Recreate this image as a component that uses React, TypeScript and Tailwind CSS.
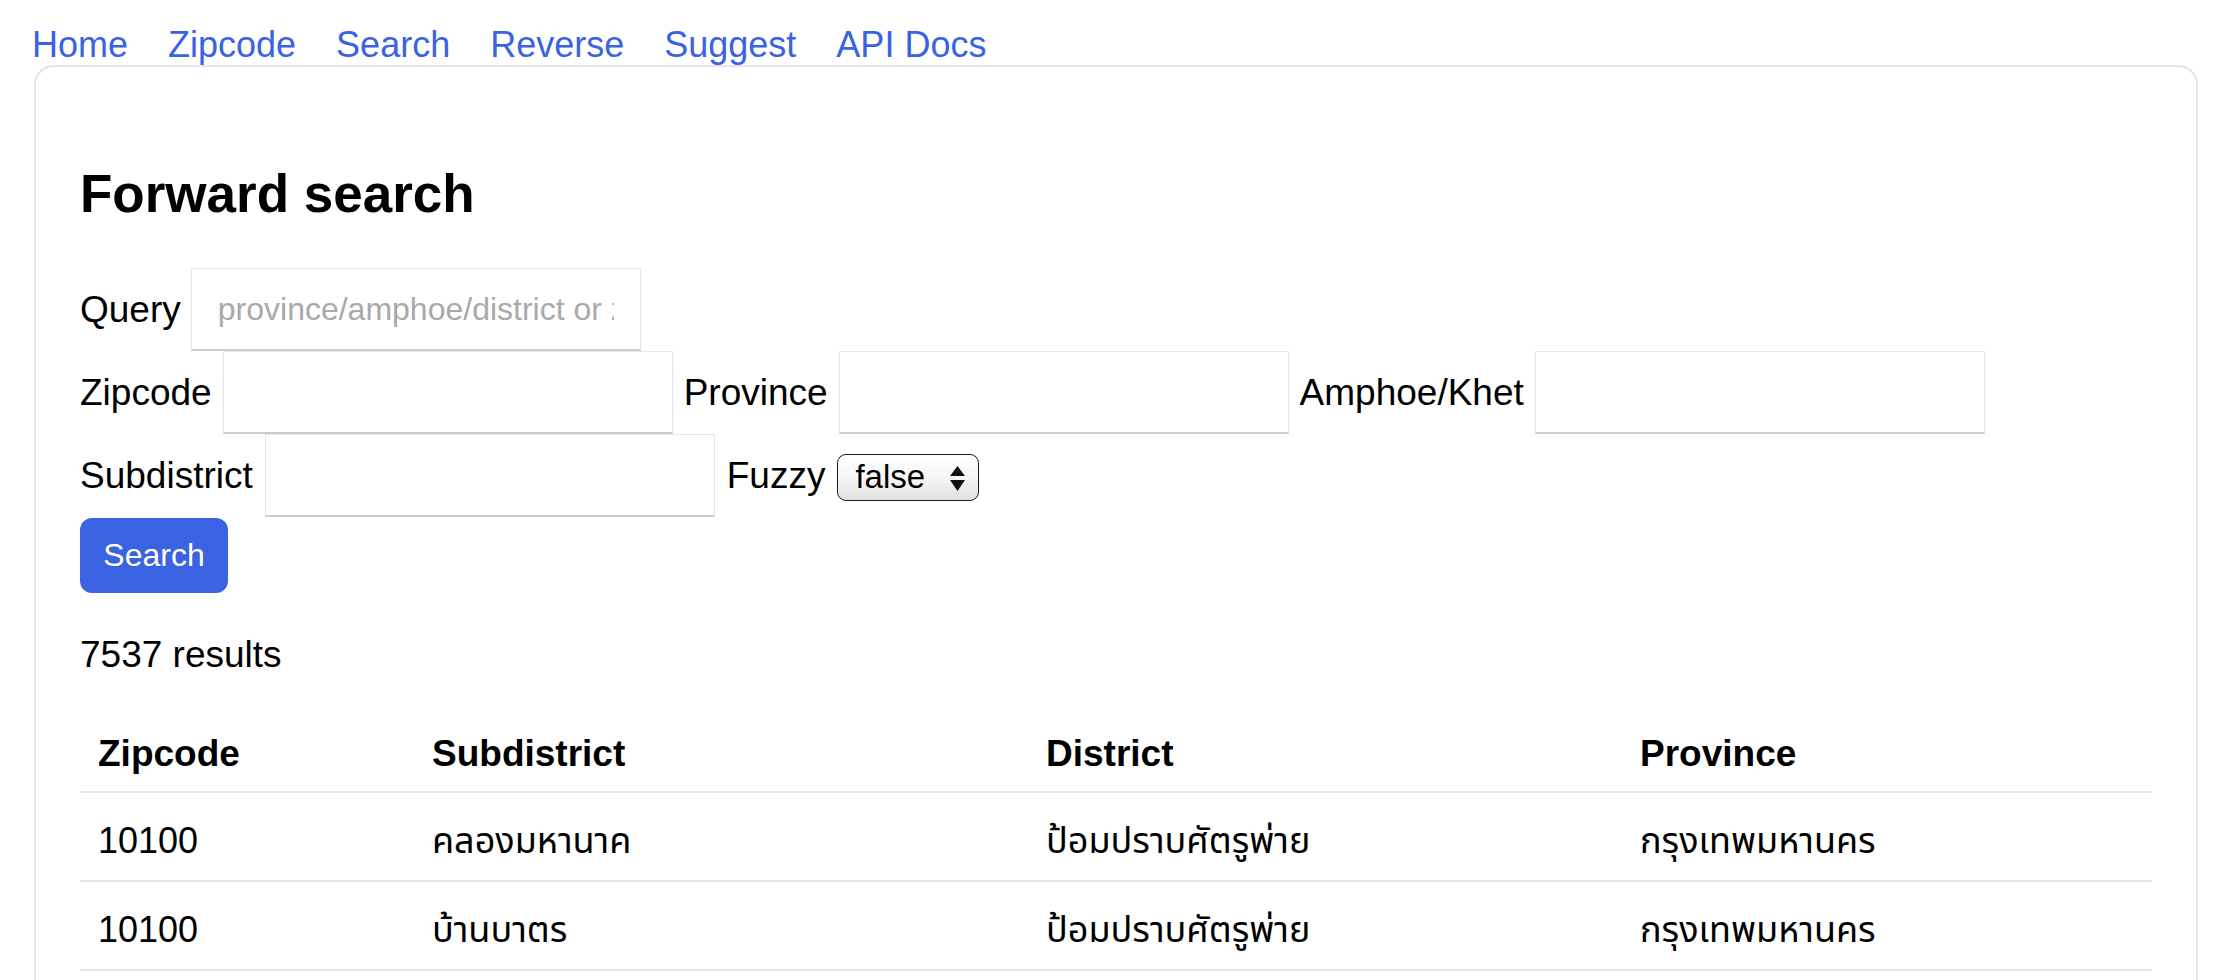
import { useState } from 'react'

const navLinks = ['Home', 'Zipcode', 'Search', 'Reverse', 'Suggest', 'API Docs']

const rows = [
  { zipcode: '10100', subdistrict: 'คลองมหานาค', district: 'ป้อมปราบศัตรูพ่าย', province: 'กรุงเทพมหานคร' },
  { zipcode: '10100', subdistrict: 'บ้านบาตร', district: 'ป้อมปราบศัตรูพ่าย', province: 'กรุงเทพมหานคร' },
  { zipcode: '10100', subdistrict: 'วัดเทพศิรินทร์', district: 'ป้อมปราบศัตรูพ่าย', province: 'กรุงเทพมหานคร' },
  { zipcode: '10100', subdistrict: 'วัดโสมนัส', district: 'ป้อมปราบศัตรูพ่าย', province: 'กรุงเทพมหานคร' },
]

const inputClass =
  'h-[83px] w-[450px] border border-[#e6e6e6] border-b-2 border-b-[#cdcdcd] bg-white px-[26px] text-[32px] text-black outline-none placeholder:text-[#a9a9a9]'

const Field = ({ label, placeholder }: { label: string; placeholder?: string }) => (
  <>
    <label className="text-[37px]">{label}</label>
    <input className={inputClass} placeholder={placeholder} />
  </>
)

export default function App() {
  const [fuzzy, setFuzzy] = useState('false')

  return (
    <div className="min-h-screen bg-white pl-[34px] pr-[24px] pt-[24px] font-['Liberation_Sans','Noto_Sans_Thai','Noto_Sans',sans-serif] text-[36px] leading-[41px] text-black">
      <nav className="-ml-[2px] flex gap-[40px]">
        {navLinks.map(l => (
          <a key={l} href="#" className="text-[#3a63e3]">
            {l}
          </a>
        ))}
      </nav>

      <main className="rounded-[20px] border-2 border-[#e4e4ea] px-[44px] pt-[46px] pb-[60px]">
        <h1 className="mt-[49px] text-[53px] font-bold leading-[64px]">Forward search</h1>

        {/* search form */}
        <div className="mt-[42px]">
          <div className="flex h-[83px] items-center gap-[10px]">
            <Field label="Query" placeholder="province/amphoe/district or zipcode" />
          </div>
          <div className="flex h-[83px] items-center gap-[11px]">
            <Field label="Zipcode" />
            <Field label="Province" />
            <Field label="Amphoe/Khet" />
          </div>
          <div className="flex h-[83px] items-center gap-[12px]">
            <Field label="Subdistrict" />
            <label className="text-[37px]">Fuzzy</label>
            <div className="relative mt-[3px] h-[47px] w-[142px] rounded-[9px] border-[1.5px] border-[#1e1e1e] bg-gradient-to-b from-white via-[#f6f6f6] to-[#e2e2e2]">
              <select
                value={fuzzy}
                onChange={e => setFuzzy(e.target.value)}
                className="h-full w-full appearance-none bg-transparent pl-[17px] text-[33px] leading-[44px] outline-none"
              >
                <option value="false">false</option>
                <option value="true">true</option>
              </select>
              <svg className="pointer-events-none absolute right-[13px] top-[11px]" width="15" height="25" viewBox="0 0 15 25">
                <path d="M7.5 0 L15 10 L0 10 Z" fill="#111" />
                <path d="M0 14 L15 14 L7.5 25 Z" fill="#111" />
              </svg>
            </div>
          </div>
          <button className="mt-px h-[75px] w-[148px] rounded-[12px] bg-[#3a63e3] text-[32px] text-white">
            Search
          </button>
        </div>

        <p className="mt-[41px] text-[37px]">7537 results</p>

        <table className="mt-[31px] w-full table-fixed border-collapse text-left">
          <colgroup>
            <col className="w-[334px]" />
            <col className="w-[614px]" />
            <col className="w-[594px]" />
            <col />
          </colgroup>
          <thead>
            <tr className="border-b-2 border-[#e5e5ea]">
              {['Zipcode', 'Subdistrict', 'District', 'Province'].map(h => (
                <th key={h} className="pl-[18px] pt-[27px] pb-[17px] text-[37px] font-bold">
                  {h}
                </th>
              ))}
            </tr>
          </thead>
          <tbody>
            {rows.map((r, i) => (
              <tr key={i} className="border-b-2 border-[#e5e5ea]">
                <td className="pl-[18px] pt-[27px] pb-[19px]">{r.zipcode}</td>
                <td className="pl-[18px] pt-[27px] pb-[19px]">{r.subdistrict}</td>
                <td className="pl-[18px] pt-[27px] pb-[19px]">{r.district}</td>
                <td className="pl-[18px] pt-[27px] pb-[19px]">{r.province}</td>
              </tr>
            ))}
          </tbody>
        </table>
      </main>
    </div>
  )
}
